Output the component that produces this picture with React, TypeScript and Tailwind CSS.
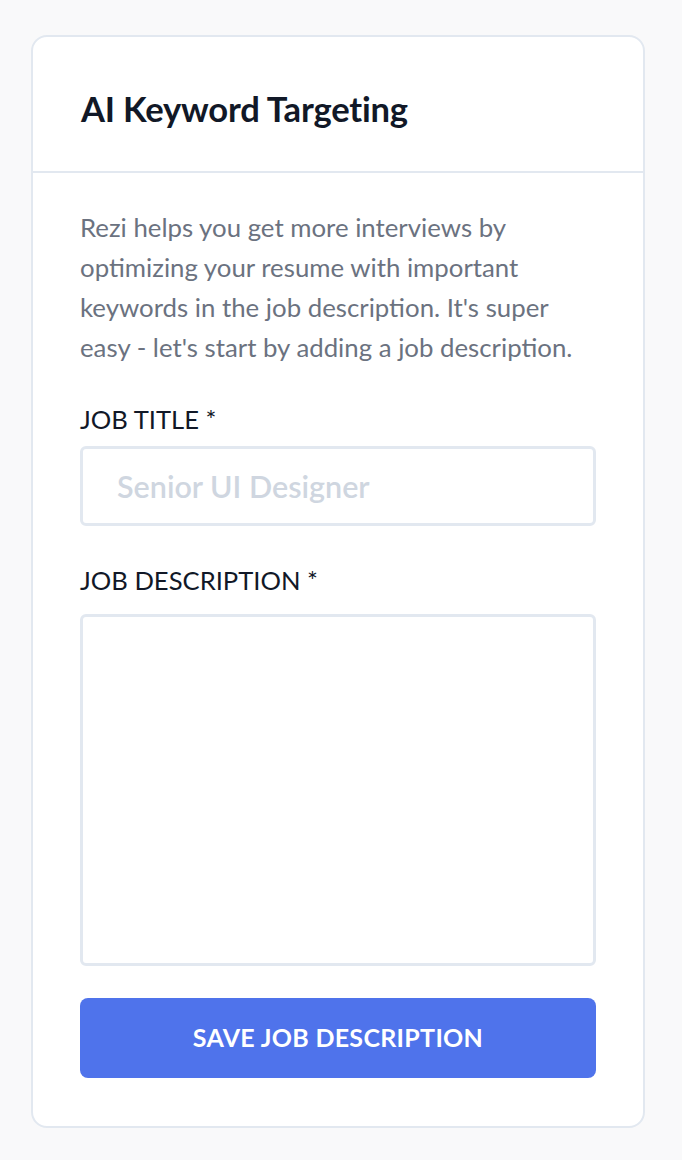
import React, { useState } from 'react';

export default function App() {
  const [title, setTitle] = useState('');
  const [description, setDescription] = useState('');

  return (
    <div className="min-h-[1160px] w-full bg-[#f9f9fa] px-[31px] pt-[35px] font-['Lato',sans-serif]">
      <div className="w-[614px] rounded-[16px] border-2 border-[#e2e8f0] bg-white">
        <div className="flex h-[136px] items-center border-b-2 border-[#e2e8f0] px-[48px] pt-[10px]">
          <h1 className="text-[34.6px] font-bold tracking-[-0.2px] text-[#111827]">AI Keyword Targeting</h1>
        </div>

        <div className="px-[47px] pb-[48px] pt-[34px]">
          <p className="text-[25.8px] leading-[40px] text-[#6b7280]">
            Rezi helps you get more interviews by<br />
            optimizing your resume with important<br />
            keywords in the job description. It's super<br />
            easy - let's start by adding a job description.
          </p>

          <label className="mt-[37px] block text-[25.6px] leading-[30px] text-[#111827]">JOB TITLE *</label>
          <input
            value={title}
            onChange={(e) => setTitle(e.target.value)}
            placeholder="Senior UI Designer"
            className="mt-[12px] block h-[80px] w-full rounded-[6px] border-[3px] border-[#e2e8f0] px-[34px] text-[30.5px] font-semibold text-[#111827] outline-none placeholder:text-[#cfd6e0]"
          />

          <label className="mt-[39px] block text-[25.6px] leading-[30px] text-[#111827]">JOB DESCRIPTION *</label>
          <textarea
            value={description}
            onChange={(e) => setDescription(e.target.value)}
            className="mt-[19px] block h-[352px] w-full resize-none rounded-[6px] border-[3px] border-[#e2e8f0] p-[20px] text-[24px] outline-none"
          />

          <button className="mt-[32px] flex h-[80px] w-full items-center justify-center rounded-[8px] bg-[#4f73eb] text-[25px] font-bold tracking-[0.3px] text-white">
            SAVE JOB DESCRIPTION
          </button>
        </div>
      </div>
    </div>
  );
}
